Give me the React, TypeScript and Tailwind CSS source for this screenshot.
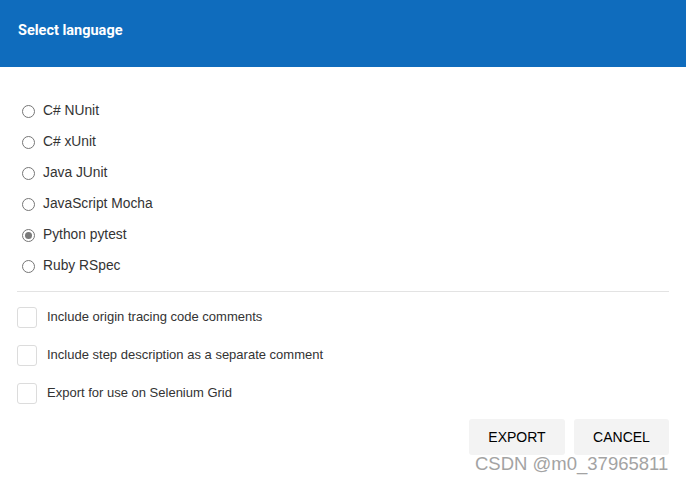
// 言語選択ダイアログ

const languages = [
    "C# NUnit",
    "C# xUnit",
    "Java JUnit",
    "JavaScript Mocha",
    "Python pytest",
    "Ruby RSpec",
];

const options = [
    "Include origin tracing code comments",
    "Include step description as a separate comment",
    "Export for use on Selenium Grid",
];

export default function App() {
    const selected = "Python pytest";

    return (
        <div className="relative w-[686px] h-[480px] bg-white overflow-hidden font-['Liberation_Sans',Arial,sans-serif]">
            <div className="h-[67px] bg-[#0f6cbd] flex items-center pl-[18px] pb-[5px]">
                <h1 className="text-[14.5px] font-bold text-white font-['Roboto','Liberation_Sans',sans-serif]">Select language</h1>
            </div>

            <div className="pt-[29px] px-[17px]">
                <div className="flex flex-col">
                    {languages.map((lang) => (
                        <label key={lang} className="h-[31px] flex items-center pl-[5px]">
                            <span className="w-[13px] h-[13px] rounded-full border border-[#767676] flex items-center justify-center">
                                {lang === selected && <span className="w-[7px] h-[7px] rounded-full bg-[#7a7a7a]" />}
                            </span>
                            <span className="ml-[8px] text-[13.8px] text-[#333]">{lang}</span>
                        </label>
                    ))}
                </div>

                <div className="mt-[9px] border-t border-[#e3e3e3]" />

                <div className="flex flex-col pt-[6px]">
                    {options.map((opt) => (
                        <label key={opt} className="h-[38px] flex items-center">
                            <span className="w-[20px] h-[21px] rounded-[3px] border border-[#dcdcdc] bg-white" />
                            <span className="ml-[10px] text-[13px] text-[#333]">{opt}</span>
                        </label>
                    ))}
                </div>

                <div className="flex justify-end gap-[9px] mt-[7px]">
                    <button type="button" className="w-[96px] h-[36px] rounded-[3px] bg-[#f3f3f3] text-[14px] text-black">EXPORT</button>
                    <button type="button" className="w-[95px] h-[36px] rounded-[3px] bg-[#f3f3f3] text-[14px] text-black">CANCEL</button>
                </div>
            </div>

            <div className="absolute left-[475px] top-[450px] text-[18.5px] text-[#9a9a9a] opacity-90">CSDN @m0_37965811</div>
        </div>
    );
}
